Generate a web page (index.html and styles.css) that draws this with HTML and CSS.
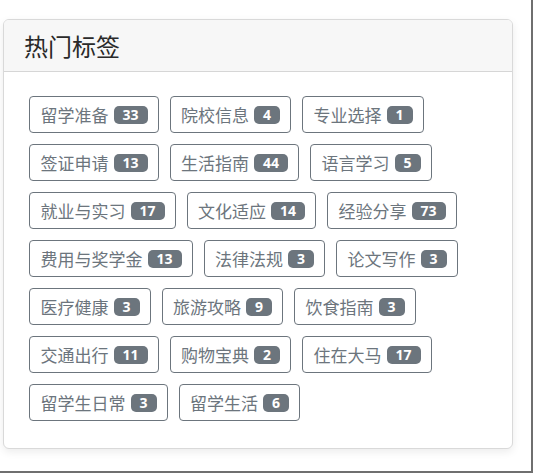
FILE: index.html
```html
<!DOCTYPE html>
<html lang="zh-CN">
<head>
<meta charset="utf-8">
<title>热门标签</title>
<link rel="stylesheet" href="styles.css">
</head>
<body>
<div class="frame">
  <div class="card">
    <div class="card-header">
      <h4 class="card-title">热门标签</h4>
    </div>
    <div class="card-body">
      <div class="tags">
        <a class="tag"><span class="tag-name">留学准备</span><span class="badge">33</span></a>
        <a class="tag"><span class="tag-name">院校信息</span><span class="badge">4</span></a>
        <a class="tag"><span class="tag-name">专业选择</span><span class="badge">1</span></a>
        <a class="tag"><span class="tag-name">签证申请</span><span class="badge">13</span></a>
        <a class="tag"><span class="tag-name">生活指南</span><span class="badge">44</span></a>
        <a class="tag"><span class="tag-name">语言学习</span><span class="badge">5</span></a>
        <a class="tag"><span class="tag-name">就业与实习</span><span class="badge">17</span></a>
        <a class="tag"><span class="tag-name">文化适应</span><span class="badge">14</span></a>
        <a class="tag"><span class="tag-name">经验分享</span><span class="badge">73</span></a>
        <a class="tag"><span class="tag-name">费用与奖学金</span><span class="badge">13</span></a>
        <a class="tag"><span class="tag-name">法律法规</span><span class="badge">3</span></a>
        <a class="tag"><span class="tag-name">论文写作</span><span class="badge">3</span></a>
        <a class="tag"><span class="tag-name">医疗健康</span><span class="badge">3</span></a>
        <a class="tag"><span class="tag-name">旅游攻略</span><span class="badge">9</span></a>
        <a class="tag"><span class="tag-name">饮食指南</span><span class="badge">3</span></a>
        <a class="tag"><span class="tag-name">交通出行</span><span class="badge">11</span></a>
        <a class="tag"><span class="tag-name">购物宝典</span><span class="badge">2</span></a>
        <a class="tag"><span class="tag-name">住在大马</span><span class="badge">17</span></a>
        <a class="tag"><span class="tag-name">留学生日常</span><span class="badge">3</span></a>
        <a class="tag"><span class="tag-name">留学生活</span><span class="badge">6</span></a>
      </div>
    </div>
  </div>
</div>
</body>
</html>
```
FILE: styles.css
```css
* { box-sizing: border-box; }

html, body {
  margin: 0;
  padding: 0;
  background: #ffffff;
}

body {
  font-family: "Noto Sans CJK SC", "Noto Sans", sans-serif;
  color: #212529;
}

.frame {
  width: 533px;
  height: 473px;
  border-right: 2px solid #6f6f6f;
  border-bottom: 2px solid #6f6f6f;
  padding: 19px 0 0 3px;
}

.card {
  width: 510px;
  background: #ffffff;
  border: 1px solid #d9d9d9;
  border-radius: 6px;
  box-shadow: 0 3px 8px rgba(0, 0, 0, 0.08);
  overflow: hidden;
}

.card-header {
  background: #f7f7f7;
  border-bottom: 1px solid #d6d6d6;
  padding: 11px 20px 11px 20px;
}

.card-title {
  margin: 0;
  font-size: 24px;
  line-height: 29px;
  font-weight: 400;
  color: #2a2a2a;
}

.card-body {
  padding: 24px 20px 27px 25px;
}

.tags {
  display: flex;
  flex-wrap: wrap;
  gap: 11px 11px;
}

.tag {
  display: inline-flex;
  align-items: center;
  gap: 5px;
  height: 37px;
  padding: 0 10px 0 10.5px;
  border: 1px solid #6c757d;
  border-radius: 4px;
  color: #6c757d;
  text-decoration: none;
}

.tag-name {
  font-size: 17px;
  line-height: 25px;
}

.badge {
  display: inline-block;
  min-width: 25px;
  padding: 0 9px;
  height: 18px;
  line-height: 18px;
  font-family: "Open Sans", "Noto Sans", sans-serif;
  font-size: 14px;
  font-weight: 700;
  text-align: center;
  color: #ffffff;
  background: #6c757d;
  border-radius: 5px;
}
```
